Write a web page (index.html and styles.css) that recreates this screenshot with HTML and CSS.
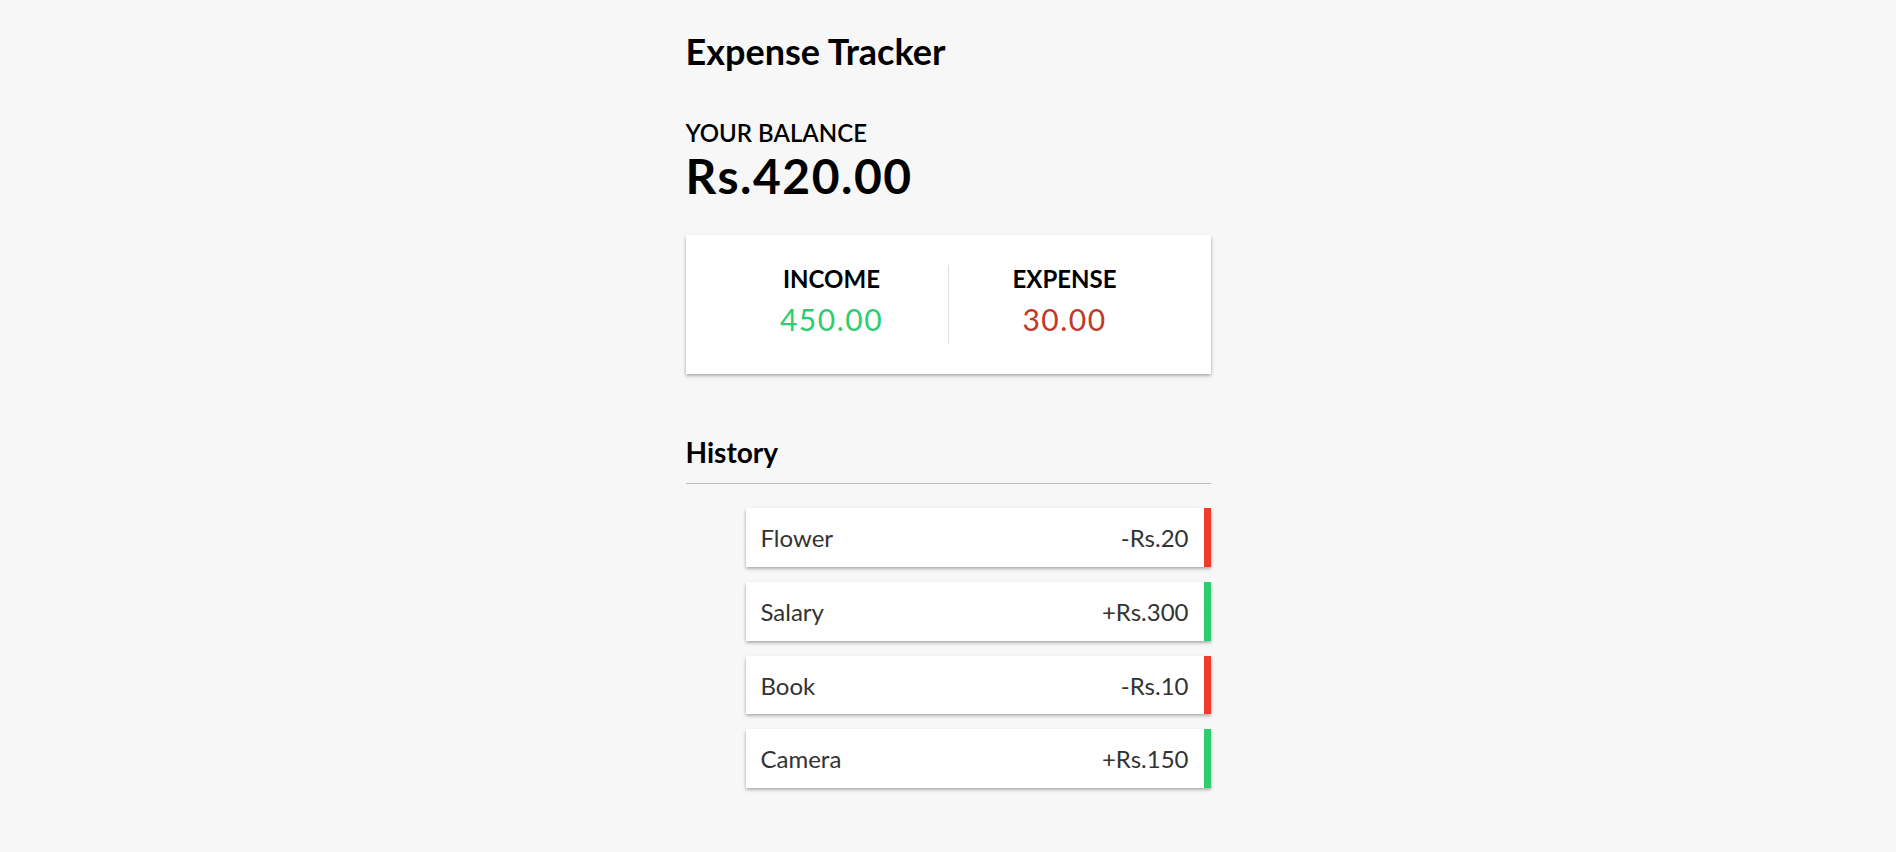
FILE: index.html
```html
<!DOCTYPE html>
<html lang="en">
<head>
<meta charset="UTF-8">
<title>Expense Tracker</title>
<link rel="stylesheet" href="styles.css">
</head>
<body>
  <div class="app">
    <h2 class="title">Expense Tracker</h2>
    <div class="container">
      <h4 class="label balance-label">Your Balance</h4>
      <h1 class="balance">Rs.420.00</h1>

      <div class="inc-exp">
        <div class="inc-exp-col first">
          <h4 class="label">Income</h4>
          <p class="money plus">450.00</p>
        </div>
        <div class="inc-exp-col">
          <h4 class="label">Expense</h4>
          <p class="money minus">30.00</p>
        </div>
      </div>

      <h3 class="section">History</h3>
      <ul class="list">
        <li class="item minus"><span>Flower</span><span>-Rs.20</span></li>
        <li class="item plus"><span>Salary</span><span>+Rs.300</span></li>
        <li class="item minus"><span>Book</span><span>-Rs.10</span></li>
        <li class="item plus"><span>Camera</span><span>+Rs.150</span></li>
      </ul>
    </div>
  </div>
</body>
</html>
```
FILE: styles.css
```css
* {
  box-sizing: border-box;
}

html, body {
  margin: 0;
  padding: 0;
}

body {
  background-color: #f7f7f7;
  font-family: Lato, "Open Sans", sans-serif;
  font-size: 24px;
  color: #000;
}

.app {
  width: 525px;
  margin: 0 auto;
  padding-top: 30px;
}

.title {
  font-size: 36px;
  font-weight: 700;
  line-height: 43.2px;
  margin: 0 0 45px;
}

.container {
  width: 525px;
}

.label {
  margin: 0;
  font-size: 24px;
  line-height: 28.8px;
  text-transform: uppercase;
  font-weight: 700;
}

.balance-label {
  font-weight: 600;
  padding-top: 1px;
  line-height: 27.8px;
}

.balance {
  margin: 0;
  font-size: 48px;
  line-height: 57.6px;
  letter-spacing: 1.5px;
  font-weight: 700;
}

.inc-exp {
  background-color: #fff;
  box-shadow: 0 1.5px 4.5px rgba(0, 0, 0, 0.12), 0 1.5px 3px rgba(0, 0, 0, 0.24);
  padding: 30px;
  display: flex;
  justify-content: space-between;
  margin: 30px 0 0;
}

.inc-exp-col {
  flex: 1;
  text-align: center;
}

.inc-exp-col.first {
  border-right: 1.5px solid #dedede;
}

.money {
  font-size: 30px;
  line-height: 36px;
  letter-spacing: 1.5px;
  margin: 7.5px 0;
}

.money.plus {
  color: #2ecc71;
}

.money.minus {
  color: #c0392b;
}

.section {
  font-size: 28.08px;
  line-height: 33.7px;
  font-weight: 700;
  border-bottom: 1px solid #bbb;
  padding-bottom: 13px;
  margin: 62px 0 24px;
}

.list {
  list-style-type: none;
  padding: 0 0 0 60px;
  margin: 0;
}

.item {
  background-color: #fff;
  box-shadow: 0 1.5px 4.5px rgba(0, 0, 0, 0.12), 0 1.5px 3px rgba(0, 0, 0, 0.24);
  color: #333;
  display: flex;
  justify-content: space-between;
  padding: 16px 15px 14px;
  margin: 0 0 15px;
  font-size: 24px;
  line-height: 28.8px;
}

.item.plus {
  border-right: 7.5px solid #2ecc71;
}

.item.minus {
  border-right: 7.5px solid #f03c2c;
}
```
